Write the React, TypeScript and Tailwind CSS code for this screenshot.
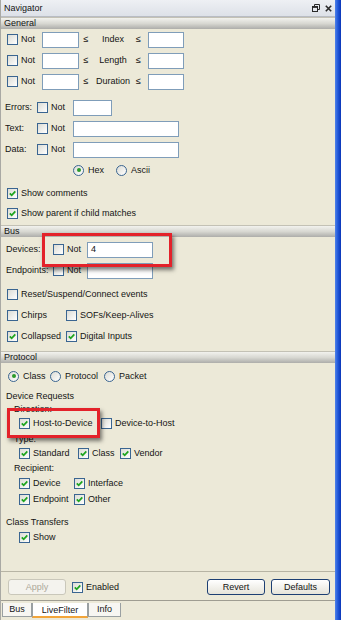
import React from "react";

type CheckProps = { on?: boolean };

const Check = ({ on = false }: CheckProps) => (
  <span className="relative block w-[11px] h-[11px] shrink-0 border border-[#3a6591] bg-gradient-to-br from-[#dcdcd5] to-white">
    {on && (
      <svg viewBox="0 0 9 9" className="absolute left-0 top-0 w-[9px] h-[9px]">
        <path d="M1.8 4.3 L3.7 6.3 L7.3 2.4" fill="none" stroke="#1fa51f" strokeWidth="1.8" />
      </svg>
    )}
  </span>
);

const Radio = ({ on = false }: CheckProps) => (
  <span className="flex items-center justify-center w-[11px] h-[11px] shrink-0 rounded-full border border-[#3a6591] bg-gradient-to-br from-[#dcdcd5] to-white">
    {on && <span className="block w-[4px] h-[4px] rounded-full bg-[#2a9a2a]" />}
  </span>
);

const Field = ({ w, value }: { w: string; value?: string }) => (
  <div className={`h-[16px] shrink-0 border border-[#7f9db9] bg-white flex items-center pl-[3px] ${w}`}>{value}</div>
);

const Header = ({ title }: { title: string }) => (
  <div className="h-[12px] flex items-center pl-[3px] bg-gradient-to-b from-[#f2f2ee] via-[#d8d8d2] to-[#adadaa] border-t border-[#c3c1b5]">
    {title}
  </div>
);

// checkbox followed by its label
const CB = ({ on, label, w = "" }: { on?: boolean; label: string; w?: string }) => (
  <div className={`flex items-center gap-[3px] shrink-0 ${w}`}>
    <Check on={on} />
    <span>{label}</span>
  </div>
);

const RB = ({ on, label, w = "" }: { on?: boolean; label: string; w?: string }) => (
  <div className={`flex items-center gap-[4px] shrink-0 ${w}`}>
    <Radio on={on} />
    <span>{label}</span>
  </div>
);

const RangeRow = ({ label }: { label: string }) => (
  <div className="h-[21px] flex items-center pl-[6px]">
    <CB label="Not" w="w-[35px]" />
    <Field w="w-[37px]" />
    <span className="w-[14px] text-center">≤</span>
    <span className="w-[40px] text-center">{label}</span>
    <span className="w-[15px] pl-[3px]">≤</span>
    <Field w="w-[36px]" />
  </div>
);

const TextRow = ({ label, w }: { label: string; w: string }) => (
  <div className="h-[21px] flex items-center pl-[4px]">
    <span className="w-[32px]">{label}</span>
    <CB label="Not" w="w-[36px]" />
    <Field w={w} />
  </div>
);

const BusRow = ({ label, value }: { label: string; value?: string }) => (
  <div className="h-[21px] flex items-center pl-[5px]">
    <span className="w-[47px]">{label}</span>
    <CB label="Not" w="w-[34px]" />
    <Field w="w-[66px]" value={value} />
  </div>
);

const XpButton = ({ label, w }: { label: string; w: string }) => (
  <div className={`h-[16px] flex items-center justify-center rounded-[3px] border border-[#1d3f73] bg-gradient-to-b from-white to-[#e6e4da] ${w}`}>
    {label}
  </div>
);

const App = () => {
  return (
    <div className="relative w-[341px] h-[620px] flex overflow-hidden bg-[#ece9d8] text-[9px] leading-none text-[#141414] font-['Liberation_Sans',Arial,sans-serif]">
      <div className="w-[335px] h-full flex flex-col border-l border-[#a9a9a4]">
        {/* title bar */}
        <div className="h-[17px] flex items-center justify-between pl-[3px] pr-[3px] bg-gradient-to-b from-[#eef0f4] to-[#dde1e8] border-b border-[#b8bcc4]">
          <span>Navigator</span>
          <div className="flex items-center gap-[5px]">
            <svg width="8" height="8" viewBox="0 0 8 8" fill="none" stroke="#2a2a2a">
              <path d="M2.5 2V0.5h5v5H6" />
              <rect x="0.5" y="2.5" width="5" height="5" />
              <path d="M0.5 3.2h5" strokeWidth="1.4" />
            </svg>
            <svg width="7" height="7" viewBox="0 0 7 7" stroke="#2a2a2a" strokeWidth="1.6">
              <path d="M0.8 0.8L6.2 6.2M6.2 0.8L0.8 6.2" />
            </svg>
          </div>
        </div>

        <div className="flex-1 flex flex-col">
          <Header title="General" />
          <RangeRow label="Index" />
          <RangeRow label="Length" />
          <RangeRow label="Duration" />

          <div className="mt-[5px]">
            <TextRow label="Errors:" w="w-[39px]" />
            <TextRow label="Text:" w="w-[106px]" />
            <TextRow label="Data:" w="w-[106px]" />
          </div>
          <div className="h-[20px] flex items-center pl-[72px]">
            <RB on label="Hex" w="w-[43px]" />
            <RB label="Ascii" />
          </div>

          <div className="mt-[3px] h-[20px] flex items-center pl-[6px]">
            <CB on label="Show comments" />
          </div>
          <div className="h-[20px] flex items-center pl-[6px]">
            <CB on label="Show parent if child matches" />
          </div>

          <div className="mt-[2px]">
            <Header title="Bus" />
          </div>
          <div className="mt-[2px]">
            <BusRow label="Devices:" value="4" />
            <BusRow label="Endpoints:" />
          </div>
          <div className="mt-[3px] h-[21px] flex items-center pl-[6px]">
            <CB label="Reset/Suspend/Connect events" />
          </div>
          <div className="h-[21px] flex items-center pl-[6px]">
            <CB label="Chirps" w="w-[59px]" />
            <CB label="SOFs/Keep-Alives" />
          </div>
          <div className="h-[21px] flex items-center pl-[6px]">
            <CB on label="Collapsed" w="w-[59px]" />
            <CB on label="Digital Inputs" />
          </div>

          <div className="mt-[4px]">
            <Header title="Protocol" />
          </div>
          <div className="mt-[3px] h-[20px] flex items-center pl-[7px]">
            <RB on label="Class" w="w-[42px]" />
            <RB label="Protocol" w="w-[54px]" />
            <RB label="Packet" />
          </div>
          <div className="mt-[3px] h-[15px] flex items-center pl-[5px]">Device Requests</div>
          <div className="h-[10px] flex items-center pl-[13px]">Direction:</div>
          <div className="h-[18px] flex items-center pl-[18px]">
            <CB on label="Host-to-Device" w="w-[82px]" />
            <CB label="Device-to-Host" />
          </div>
          <div className="h-[14px] flex items-center pl-[13px]">Type:</div>
          <div className="h-[14px] flex items-center pl-[18px]">
            <CB on label="Standard" w="w-[59px]" />
            <CB on label="Class" w="w-[42px]" />
            <CB on label="Vendor" />
          </div>
          <div className="h-[16px] flex items-center pl-[13px]">Recipient:</div>
          <div className="h-[15px] flex items-center pl-[18px]">
            <CB on label="Device" w="w-[55px]" />
            <CB on label="Interface" />
          </div>
          <div className="h-[16px] flex items-center pl-[18px]">
            <CB on label="Endpoint" w="w-[55px]" />
            <CB on label="Other" />
          </div>
          <div className="mt-[6px] h-[18px] flex items-center pl-[5px]">Class Transfers</div>
          <div className="h-[12px] flex items-center pl-[18px]">
            <CB on label="Show" />
          </div>
        </div>

        {/* buttons */}
        <div className="h-[30px] flex items-start pt-[7px] pl-[7px] border-t border-[#b7b4a4] border-b border-b-[#9f9d92]">
          <div className="w-[58px] h-[16px] flex items-center justify-center rounded-[3px] border border-[#c9c7ba] bg-[#f4f3ee] text-[#aca899]">
            Apply
          </div>
          <div className="ml-[6px] h-[16px] flex items-center">
            <CB on label="Enabled" />
          </div>
          <div className="ml-auto mr-[5px] flex gap-[6px]">
            <XpButton label="Revert" w="w-[58px]" />
            <XpButton label="Defaults" w="w-[59px]" />
          </div>
        </div>

        {/* tabs */}
        <div className="flex-none h-[19px] flex items-start pl-[1px] pt-[2px]">
          <div className="w-[30px] h-[14px] flex items-center justify-center border border-t-0 border-[#9aa0a2] bg-[#f7f6f2]">Bus</div>
          <div className="w-[56px] h-[15px] flex items-center justify-center border-x border-[#9aa0a2] border-b-[2px] border-b-[#f2a53a] bg-white pt-[2px]">
            LiveFilter
          </div>
          <div className="w-[33px] h-[14px] flex items-center justify-center border border-t-0 border-[#9aa0a2] bg-[#f7f6f2]">Info</div>
        </div>
      </div>
      <div className="w-[6px] h-full bg-gradient-to-r from-[#4f82ea] via-[#1f55d8] to-[#0b36b8]" />

      {/* annotation boxes */}
      <div className="absolute left-[42px] top-[233px] w-[130px] h-[34px] border-[3px] border-[#e3222a] shadow-[2px_3px_4px_rgba(0,0,0,0.5)]" />
      <div className="absolute left-[7px] top-[408px] w-[93px] h-[30px] border-[3px] border-[#e3222a] shadow-[2px_3px_4px_rgba(0,0,0,0.5)]" />
    </div>
  );
};

export default App;
